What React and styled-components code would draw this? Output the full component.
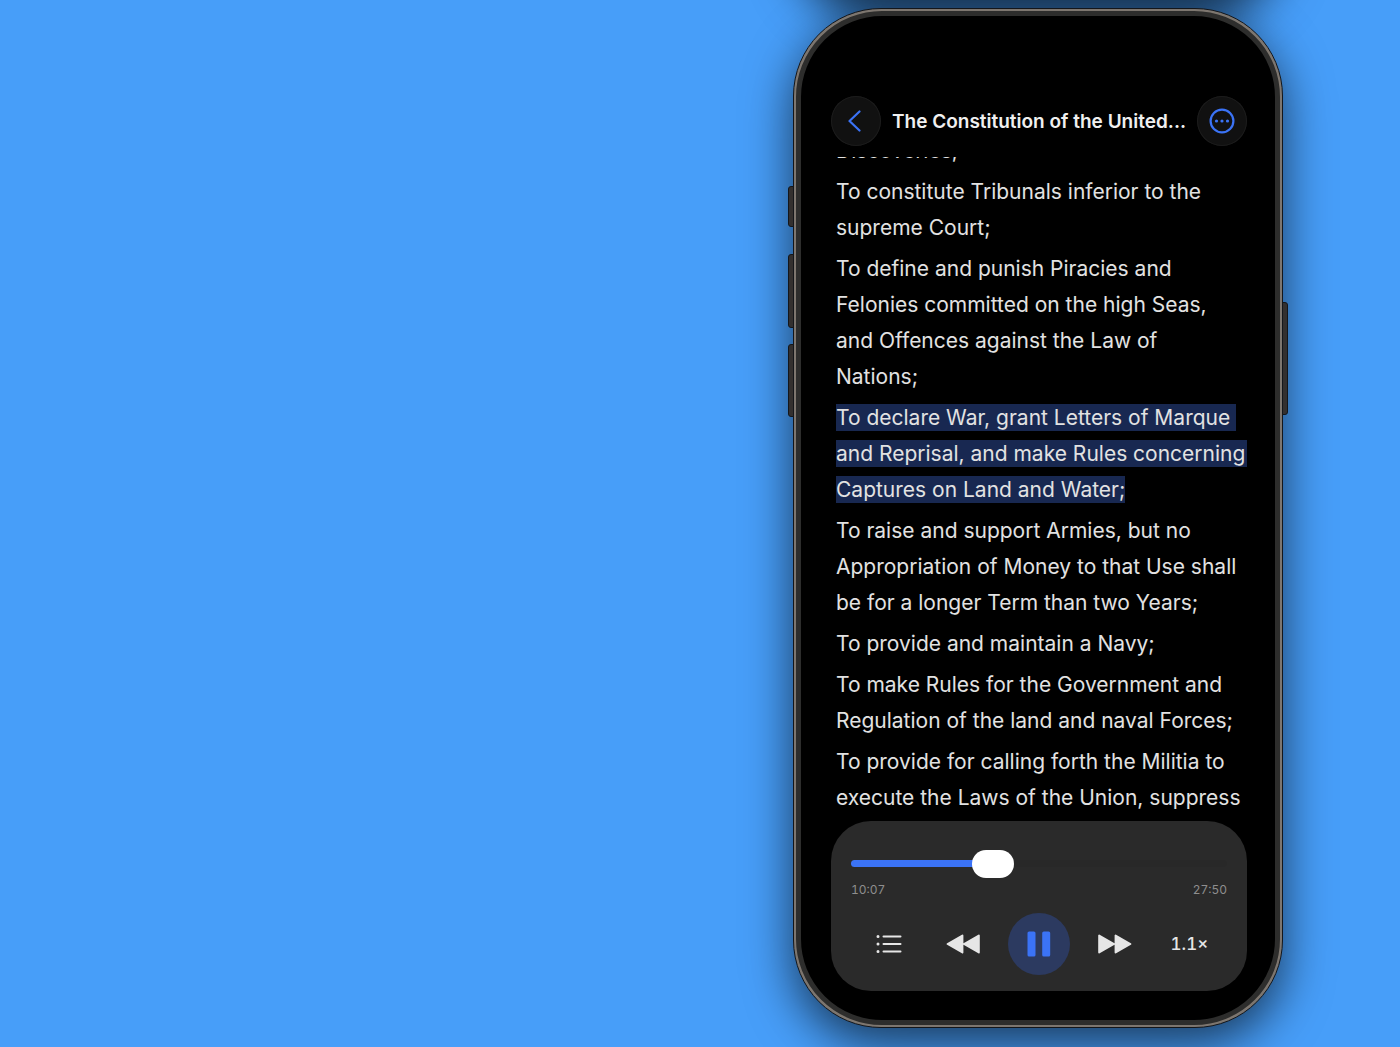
import React, { useState, useEffect, useRef } from 'react';
import styled, { createGlobalStyle } from 'styled-components';

const TOTAL = 1670;

const paragraphs = [
  { text: 'Discoveries;' },
  { text: 'To constitute Tribunals inferior to the supreme Court;' },
  { text: 'To define and punish Piracies and Felonies committed on the high Seas, and Offences against the Law of\nNations;' },
  { text: 'To declare War, grant Letters of Marque and Reprisal, and make Rules concerning Captures on Land and Water;', reading: true },
  { text: 'To raise and support Armies, but no Appropriation of Money to that Use shall be for a longer Term than two Years;' },
  { text: 'To provide and maintain a Navy;' },
  { text: 'To make Rules for the Government and Regulation of the land and naval Forces;' },
  { text: 'To provide for calling forth the Militia to execute the Laws of the Union, suppress' },
];

const formatTime = (s) => Math.floor(s / 60) + ':' + String(s % 60).padStart(2, '0');

export default function App() {
  const [time, setTime] = useState(607);
  const [playing, setPlaying] = useState(true);
  const reader = useRef(null);

  useEffect(() => {
    reader.current.scrollTop = 24;
  }, []);

  return (<Stage>
    <GlobalStyle />
    <PreviousPhone />
    <Phone>
      <SideButton $side="left" $top="17.4%" $height="4%" />
      <SideButton $side="left" $top="24.1%" $height="7.2%" />
      <SideButton $side="left" $top="32.9%" $height="7.2%" />
      <SideButton $side="right" $top="28.8%" $height="11.1%" />
      <Screen>
        <Header>
          <RoundButton aria-label="Back">
            <svg width="18" height="22" viewBox="0 0 18 22"><path d="M12.5 1.5 2.5 11l10 9.5" /></svg>
          </RoundButton>
          <Title>The Constitution of the United...</Title>
          <RoundButton aria-label="More">
            <svg width="26" height="26" viewBox="0 0 26 26">
              <circle cx="13" cy="13" r="11.4" />
              <g fill="#3b73f6" stroke="none">
                <circle cx="7.5" cy="13" r="1.6" />
                <circle cx="13" cy="13" r="1.6" />
                <circle cx="18.5" cy="13" r="1.6" />
              </g>
            </svg>
          </RoundButton>
        </Header>
        <Reader ref={reader}>
          {paragraphs.map((p) => (
            <Paragraph key={p.text}>{p.reading ? <Highlight>{p.text}</Highlight> : p.text}</Paragraph>
          ))}
        </Reader>
        <Player>
          <Slider
            type="range"
            aria-label="Position"
            min="0"
            max={TOTAL}
            value={time}
            style={{ '--played': (time / TOTAL) * 100 + '%' }}
            onChange={(e) => { setTime(Number(e.target.value)) }}
          />
          <Times>
            <span>{formatTime(time)}</span>
            <span>{formatTime(TOTAL)}</span>
          </Times>
          <Controls>
            <IconButton aria-label="Contents">
              <svg width="26" height="20" viewBox="0 0 26 20" fill="none" stroke="#e6e6e6" strokeLinecap="round">
                <path strokeWidth="2" d="M7.5 2.6h17M7.5 10h17M7.5 17.4h17" />
                <path strokeWidth="3" d="M2 2.6h.01M2 10h.01M2 17.4h.01" />
              </svg>
            </IconButton>
            <IconButton aria-label="Rewind" onClick={() => { setTime(Math.max(0, time - 15)) }}>
              <SkipIcon back />
            </IconButton>
            <PlayButton aria-label={playing ? 'Pause' : 'Play'} onClick={() => { setPlaying(!playing) }}>
              <svg width="24" height="26" viewBox="0 0 24 26" fill="#3b73f6">
                {playing
                  ? <><rect x="0.5" y="0.5" width="8" height="25" rx="1.6" /><rect x="15.2" y="0.5" width="8" height="25" rx="1.6" /></>
                  : <path d="M4 1v24l19-12z" />}
              </svg>
            </PlayButton>
            <IconButton aria-label="Fast forward" onClick={() => { setTime(Math.min(TOTAL, time + 15)) }}>
              <SkipIcon />
            </IconButton>
            <IconButton>1.1×</IconButton>
          </Controls>
        </Player>
      </Screen>
    </Phone>
  </Stage>);
}

const SkipIcon = ({ back }) => (
  <svg width="36" height="20" viewBox="0 0 36 20">
    <g fill="#e6e6e6" stroke="#e6e6e6" strokeWidth="2" strokeLinejoin="round" transform={back ? 'rotate(180 18 10)' : undefined}>
      <path d="M3.2 1.6v16.8L18 10zM19.6 1.6v16.8L34.4 10z" />
    </g>
  </svg>
);

const GlobalStyle = createGlobalStyle`
  * {
    box-sizing: border-box;
  }
  body {
    margin: 0;
    background: #479ef9;
    font-family: Inter, "Liberation Sans", sans-serif;
  }
  button {
    border: 0;
    padding: 0;
    background: none;
    color: inherit;
    font-family: inherit;
    cursor: pointer;
  }
`;

const Stage = styled.main`
  position: relative;
  display: flex;
  justify-content: flex-end;
  align-items: flex-start;
  min-height: 100vh;
  padding: 8px 117px 19px 20px;
  overflow: hidden;
`;

const Phone = styled.section`
  position: relative;
  width: 35vw;
  min-width: 440px;
  aspect-ratio: 490 / 1020;
  padding: 2px;
  border-radius: 88px;
  background: #7d766f;
  border: 1px solid #14161a;
  box-shadow: 0 16px 48px rgba(0, 0, 0, 0.64);
`;

// lower end of the phone further up the page, only its shadow reaches here
const PreviousPhone = styled.div`
  position: absolute;
  right: 117px;
  bottom: 100%;
  width: 35vw;
  height: 200px;
  border-radius: 88px;
  box-shadow: 0 20px 48px rgba(0, 0, 0, 0.7);
`;

const SideButton = styled.div`
  position: absolute;
  ${(p) => p.$side}: -6px;
  top: ${(p) => p.$top};
  width: 6px;
  height: ${(p) => p.$height};
  background: #33302f;
  border: 1px solid #14161a;
  border-radius: ${(p) => (p.$side === 'left' ? '3px 0 0 3px' : '0 3px 3px 0')};
`;

const Screen = styled.div`
  display: flex;
  flex-direction: column;
  height: 100%;
  padding: 80px 28px 29px 30px;
  border: 5px solid #2d2d2c;
  border-radius: 86px;
  background: #000;
`;

const Header = styled.header`
  display: flex;
  align-items: center;
  justify-content: space-between;
  margin-bottom: 11px;
`;

const RoundButton = styled.button`
  display: flex;
  align-items: center;
  justify-content: center;
  flex: none;
  width: 50px;
  height: 50px;
  border-radius: 50%;
  background: #111;
  box-shadow: inset 0 0 0 1px #1c1c1c;
  svg {
    fill: none;
    stroke: #3b73f6;
    stroke-width: 2.2;
    stroke-linecap: round;
    stroke-linejoin: round;
  }
`;

const Title = styled.h1`
  margin: 0;
  padding-top: 2px;
  font-size: 19px;
  font-weight: 600;
  line-height: 24px;
  white-space: nowrap;
  color: #f0f0f0;
`;

const Reader = styled.article`
  flex: 1;
  min-height: 0;
  padding: 0 0 24px 5px;
  overflow-y: auto;
  scrollbar-width: none;
`;

const Paragraph = styled.p`
  margin: 0 0 5px;
  font-size: 21px;
  line-height: 36px;
  white-space: pre-wrap;
  color: #e2e2e2;
`;

const Highlight = styled.mark`
  padding: 1px 0;
  background: #182851;
  color: inherit;
`;

const Player = styled.footer`
  padding: 28px 20px 16px;
  border-radius: 40px;
  background: #2a2a2a;
`;

const Slider = styled.input`
  appearance: none;
  display: block;
  width: 100%;
  height: 28px;
  margin: 0;
  background: none;
  &::-webkit-slider-runnable-track {
    height: 7px;
    border-radius: 4px;
    background: linear-gradient(to right, #3b73f6 var(--played), #282828 var(--played));
  }
  &::-webkit-slider-thumb {
    appearance: none;
    width: 42px;
    height: 28px;
    margin-top: -10px;
    border-radius: 14px;
    background: #fff;
  }
`;

const Times = styled.div`
  display: flex;
  justify-content: space-between;
  margin: 4px 0 14px;
  font-size: 12px;
  line-height: 18px;
  font-variant-numeric: tabular-nums;
  color: #8e8e8e;
`;

const Controls = styled.div`
  display: grid;
  grid-template-columns: repeat(5, 1fr);
  align-items: center;
  justify-items: center;
`;

const IconButton = styled.button`
  display: flex;
  align-items: center;
  justify-content: center;
  height: 44px;
  min-width: 44px;
  font-size: 17px;
  font-weight: 500;
  font-variant-numeric: tabular-nums;
  color: #e6e6e6;
`;

const PlayButton = styled(IconButton)`
  width: 62px;
  height: 62px;
  border-radius: 50%;
  background: #2c3a60;
`;
